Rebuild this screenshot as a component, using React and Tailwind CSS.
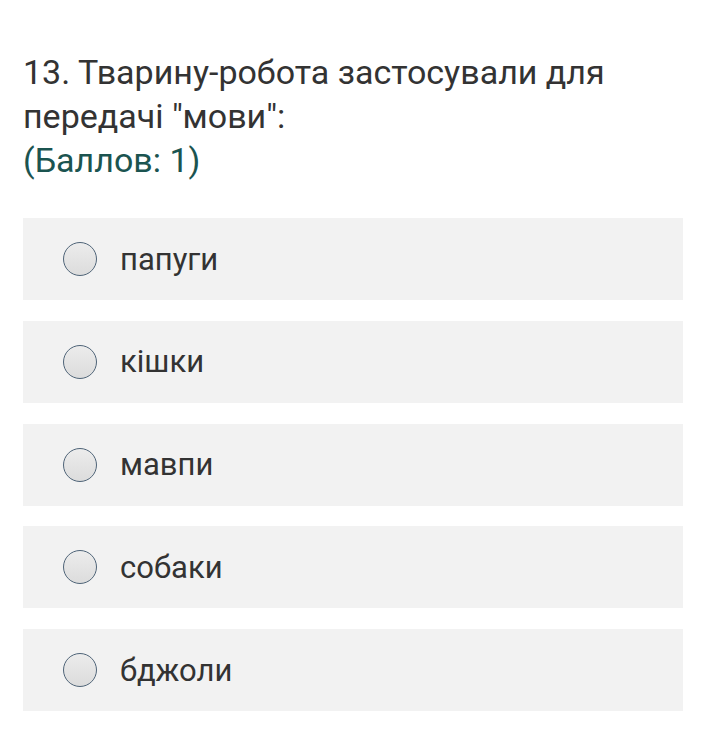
import React from "react";

const options = ["папуги", "кішки", "мавпи", "собаки", "бджоли"];

const Radio = () => (
  <span className="block h-[34px] w-[34px] shrink-0 rounded-full border-[1.5px] border-[#4f6478] bg-gradient-to-b from-[#ececec] to-[#dcdcdc]" />
);

export default function App() {
  return (
    <div className="min-h-[734px] w-[713px] bg-white pl-[23px] pr-[30px] pt-[50px] font-['Roboto',sans-serif]">
      <div className="text-[34px] leading-[44px] text-[#333333]">
        <p>13. Тварину-робота застосували для передачі "мови":</p>
        <p className="text-[#1b5450]">(Баллов: 1)</p>
      </div>

      <div className="mt-[36px] flex flex-col gap-[20.75px]">
        {options.map((opt) => (
          <label
            key={opt}
            className="flex h-[82px] items-center gap-[23px] bg-[#f2f2f2] pl-[40px]"
          >
            <Radio />
            <span className="text-[31px] leading-none text-[#333333]">{opt}</span>
          </label>
        ))}
      </div>
    </div>
  );
}
